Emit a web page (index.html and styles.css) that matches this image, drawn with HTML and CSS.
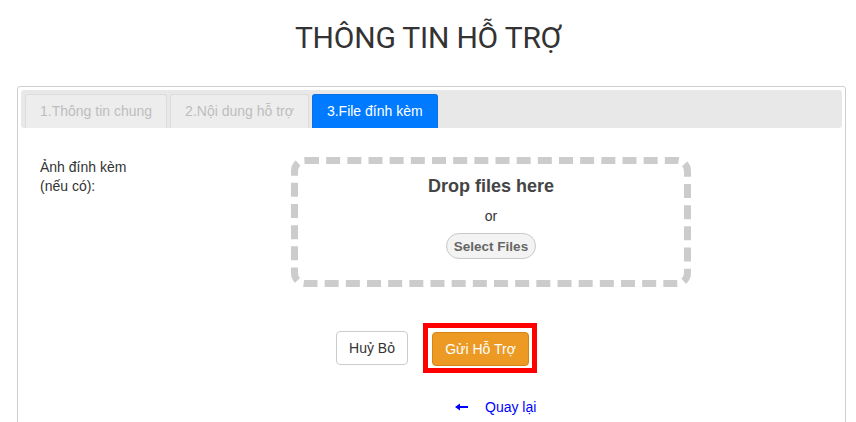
FILE: index.html
```html
<!DOCTYPE html>
<html lang="vi">
<head>
<meta charset="utf-8">
<title>Thông tin hỗ trợ</title>
<link rel="stylesheet" href="styles.css">
</head>
<body>
<h1 class="title">THÔNG TIN HỖ TRỢ</h1>
<div class="panel">
  <div class="tabs">
    <div class="tab">1.Thông tin chung</div>
    <div class="tab">2.Nội dung hỗ trợ</div>
    <div class="tab tab-active">3.File đính kèm</div>
  </div>
  <div class="content">
    <div class="row">
      <div class="label">Ảnh đính kèm<br>(nếu có):</div>
      <div class="dropzone">
        <div class="drop-title">Drop files here</div>
        <div class="drop-or">or</div>
        <button class="select-btn" type="button">Select Files</button>
      </div>
    </div>
    <div class="actions">
      <button class="btn btn-cancel" type="button">Huỷ Bỏ</button>
      <span class="highlight"><button class="btn btn-send" type="button">Gửi Hỗ Trợ</button></span>
    </div>
    <div class="back">
      <a class="back-link" href="#"><svg class="back-arrow" width="14" height="8" viewBox="0 0 14 8"><path d="M0 4 L5 0.5 L5 3 L13 3 L13 5 L5 5 L5 7.5 Z" fill="#0000ff"/></svg><span>Quay lại</span></a>
    </div>
  </div>
</div>
</body>
</html>
```

FILE: styles.css
```css
html, body {
  margin: 0;
  padding: 0;
  background: #fff;
}
body {
  font-family: "Liberation Sans", Arial, sans-serif;
  font-size: 14px;
  color: #333;
}
.title {
  margin: 0;
  padding-top: 18px;
  height: 40px;
  line-height: 40px;
  margin-bottom: 28px;
  font-family: Roboto, "Liberation Sans", sans-serif;
  font-weight: 400;
  font-size: 30px;
  letter-spacing: -0.2px;
  text-align: center;
  color: #333;
}
.panel {
  margin: 0 10px 0 17px;
  border: 1px solid #cfcfcf;
  border-radius: 3px;
  padding: 3px 3px 0;
  height: 340px;
  box-sizing: border-box;
}
.tabs {
  display: flex;
  gap: 3px;
  background: #e8e8e8;
  border-radius: 3px;
  padding: 4px 4px 0;
  height: 38px;
  box-sizing: border-box;
}
.tab {
  height: 34px;
  box-sizing: border-box;
  padding: 0 14px;
  line-height: 33px;
  background: #ededed;
  border: 1px solid #dcdcdc;
  border-bottom: none;
  border-radius: 3px 3px 0 0;
  color: #bdbdbd;
  font-size: 14px;
}
.tab-active {
  background: #007bff;
  border-color: #0a6fe0;
  color: #fff;
}
.content {
  padding: 29px 19px 0;
}
.row {
  display: grid;
  grid-template-columns: 251px 400px;
}
.label {
  line-height: 19px;
  padding-top: 1px;
  color: #333;
}
.dropzone {
  height: 130px;
  box-sizing: border-box;
  border: 7px dashed #cccccc;
  border-radius: 14px;
  display: flex;
  flex-direction: column;
  align-items: center;
}
.drop-title {
  margin-top: 12px;
  line-height: 20px;
  font-size: 18px;
  font-weight: 700;
  color: #444;
}
.drop-or {
  margin-top: 12px;
  line-height: 16px;
  font-size: 14px;
  color: #333;
}
.select-btn {
  margin-top: 9px;
  height: 26px;
  padding: 0 7px;
  border: 1px solid #c8c8c8;
  border-radius: 13px;
  background: #f3f3f3;
  color: #666;
  font-family: "Liberation Sans", Arial, sans-serif;
  font-size: 13.5px;
  font-weight: 700;
}
.actions {
  display: flex;
  align-items: center;
  gap: 15px;
  margin-top: 36px;
  margin-left: 296px;
}
.btn {
  height: 34px;
  border-radius: 4px;
  font-family: "Liberation Sans", Arial, sans-serif;
  font-size: 14px;
  box-sizing: border-box;
}
.btn-cancel {
  width: 72px;
  background: #fff;
  border: 1px solid #ccc;
  color: #333;
}
.highlight {
  display: flex;
  border: 5px solid #ff0000;
  padding: 4px 3px 2px 4px;
}
.btn-send {
  width: 97px;
  background: #ec9a23;
  border: 1px solid #d58512;
  color: #fff;
}
.back {
  margin-top: 23px;
  margin-left: 415px;
  line-height: 20px;
}
.back-link {
  display: inline-flex;
  align-items: center;
  gap: 16px;
  color: #0000ff;
  text-decoration: none;
  font-size: 14px;
}
.back-arrow {
  display: block;
}
```
